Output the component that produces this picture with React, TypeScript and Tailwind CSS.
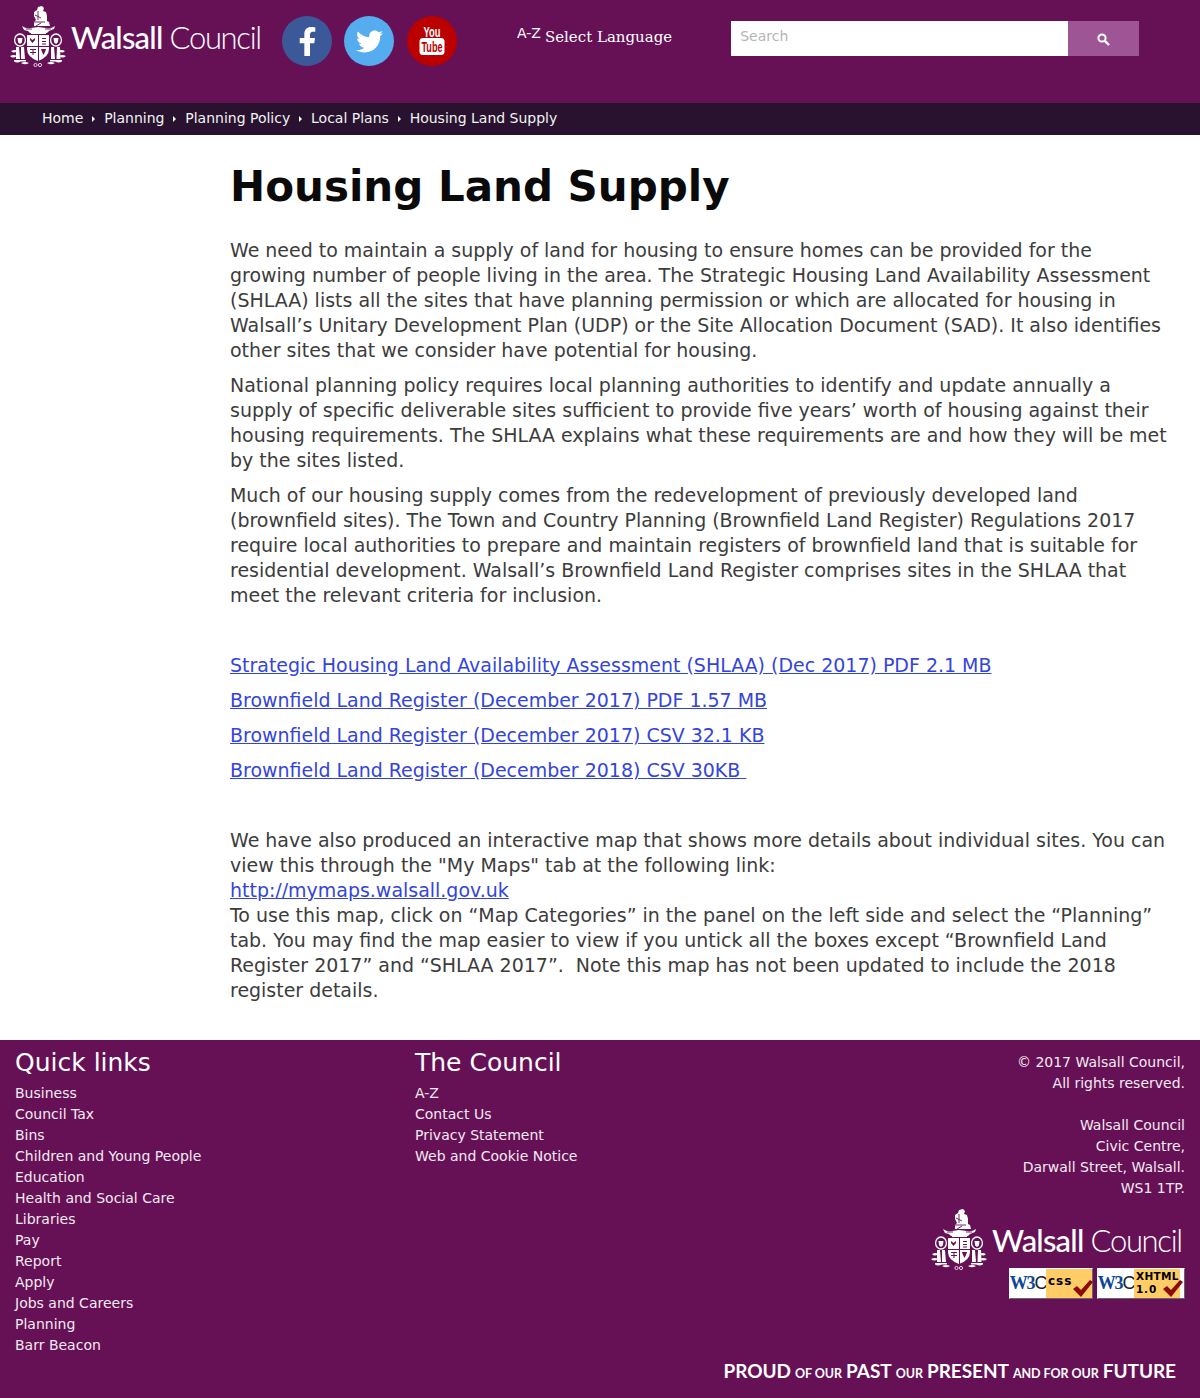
import React from "react";
import { FaFacebookF, FaTwitter } from "react-icons/fa";

function Crest({ className }: { className?: string }) {
  return (
    <svg viewBox="0 0 58 62" className={className} fill="none">
      {/* crest figure */}
      <g fill="#fff">
        <path d="M25 7l3-2 1-3 4-1 2 2-1 3 3 1 1 4 0 5 2 1 1 4-16 0 0-4 2-2-2-4z" />
        <path d="M13 21q4 3 9 2l7-1 8 1q5 1 9-2l-1 3-5 2-2 2-17 0-2-2-4-1z" />
        <path d="M22 27h15v2H22z" />
      </g>
      <g stroke="#661155" strokeWidth=".9">
        <path d="M29 6v9M26 10l6 3M25 17h11M27 21l5-3M17 24h6M36 24h6" />
      </g>
      {/* lions */}
      <g stroke="#fff" strokeWidth="1.3" fill="#661155">
        <ellipse cx="11" cy="35" rx="5.4" ry="6" />
        <ellipse cx="47" cy="35" rx="5.4" ry="6" />
      </g>
      <g fill="#fff">
        <path d="M8.5 33h5l-.6 4.500-1.900 1.500-1.900-1.500zM44.500 33h5l-.6 4.500-1.900 1.500-1.900-1.500z" />
        <path d="M7 42h3l1 12h-4zM12 42h3l1 12h-4zM42 42h3l1 12h-4zM48 42h3l.5 12h-4z" />
        <path d="M5 55h12v1.500H5zM41 55h12v1.500H41z" />
        <path d="M2 46q4-2 6 0q-3 3-6 0zM1 51q4-2 7 0q-4 3-7 0zM5 56q4-2 7 0q-4 3-7 0zM12 58q4-2 8 0q-4 2.500-8 0zM56 46q-4-2-6 0q3 3 6 0zM57 51q-4-2-7 0q4 3 7 0zM53 56q-4-2-7 0q4 3 7 0zM46 58q-4-2-8 0q4 2.500 8 0z" />
      </g>
      {/* shield */}
      <path d="M18 30h22v14q0 8-11 12q-11-4-11-12z" fill="#fff" />
      <g fill="#661155">
        <path d="M29 30h1v26h-1zM18 41h22v1H18z" />
        <path d="M21 33l2.500 2 2.500-2v2l-2.500 3-2.500-3zM33 33h4v1h-4zM33 36h4v1h-4zM33 38.500h4v1h-4z" />
        <path d="M21 44h6v1h-6zM23.500 44h1v6h-1zM21 47h6v1h-6z" />
        <path d="M32 44l5 0-1 3-1.500 3-1.500-3z" />
      </g>
      <circle cx="26.500" cy="60" r="1.600" stroke="#fff" strokeWidth=".8" />
      <circle cx="31" cy="60" r="1.600" stroke="#fff" strokeWidth=".8" />
    </svg>
  );
}

function Logo() {
  return (
    <div className="flex items-start">
      <Crest className="w-[58px] h-[62px] shrink-0" />
      <div className="ml-[4px] mt-[12px] flex whitespace-nowrap font-['Lato',sans-serif] text-[31px] leading-[40px] text-white text-left">
        <span className="font-medium tracking-[-0.800px]">Walsall</span>
        <span className="font-light ml-[7px] tracking-[-1.300px]">Council</span>
      </div>
    </div>
  );
}

function YouTube() {
  return (
    <svg viewBox="0 0 50 50" className="w-[50px] h-[50px] ml-[1px]">
      <circle cx="25" cy="25" r="25" fill="#bb0000" />
      <text x="25" y="20.500" textAnchor="middle" fill="#fff" fontFamily="Liberation Sans, sans-serif" fontWeight="700" fontSize="14" textLength="17" lengthAdjust="spacingAndGlyphs">You</text>
      <rect x="12.500" y="22" width="25" height="17" rx="3.500" fill="#fff" />
      <text x="25" y="36" textAnchor="middle" fill="#bb0000" fontFamily="Liberation Sans, sans-serif" fontWeight="700" fontSize="15" textLength="21" lengthAdjust="spacingAndGlyphs">Tube</text>
    </svg>
  );
}

function Crumb({ children, last }: { children: React.ReactNode; last?: boolean }) {
  return (
    <>
      <span>{children}</span>
      {!last && <span className="mx-[8.900px] w-0 h-0 border-y-[3px] border-y-transparent border-l-[3px] border-l-white mt-[2px]" />}
    </>
  );
}

function W3C({ label, second, wide }: { label: string; second?: string; wide?: boolean }) {
  return (
    <div className={`relative h-[31px] bg-white border border-white border-r-[#666] border-b-[#666] flex text-left ${wide ? "w-[88px] pr-[4px]" : "w-[84px]"}`}>
      <div className="w-[36px] h-[29px] shrink-0 flex items-center justify-center whitespace-nowrap overflow-hidden font-['Liberation_Serif',serif] text-[18px] leading-[29px] tracking-[-1.200px] font-bold text-[#0c479c]">
        W3<span className="font-['Liberation_Sans',sans-serif] font-normal text-[#222]">C</span>
      </div>
      <div className="flex-1 bg-[#fc6] pl-[2px] font-['DejaVu_Sans',sans-serif] font-bold text-black text-[11px] leading-[13px] flex flex-col justify-center">
        {second ? (
          <>
            <span className="text-[10.500px] tracking-[0.300px]">{label}</span>
            <span className="text-[10.500px] tracking-[0.800px] pb-[2px]">{second}</span>
          </>
        ) : (
          <span className="text-[12px] tracking-[1px] pb-[4px]">{label}</span>
        )}
      </div>
      <svg viewBox="0 0 22 18" className={`absolute bottom-[1px] w-[22px] h-[18px] ${wide ? "right-[0px]" : "right-[-2px]"}`}>
        <path d="M1 10l4-3 4 4 9-10 3 2-12 15z" fill="#8b0a0a" />
      </svg>
    </div>
  );
}

const quick = ["Business", "Council Tax", "Bins", "Children and Young People", "Education", "Health and Social Care", "Libraries", "Pay", "Report", "Apply", "Jobs and Careers", "Planning", "Barr Beacon"];
const council = ["A-Z", "Contact Us", "Privacy Statement", "Web and Cookie Notice"];
const linkCls = "text-[#3344dd] underline";

export default function App() {
  return (
    <div className="w-[1200px] h-[1398px] bg-white font-['DejaVu_Sans',sans-serif] overflow-hidden">
      <header className="h-[103px] bg-[#661155] flex items-start pl-[9px]">
        <div className="mt-[5px] w-[252px] shrink-0"><Logo /></div>
        <div className="flex gap-[12px] mt-[16px] ml-[21px]">
          <div className="w-[50px] h-[50px] rounded-full bg-[#3b5998] flex items-center justify-center text-white text-[29px]"><FaFacebookF /></div>
          <div className="w-[50px] h-[50px] rounded-full bg-[#55acee] flex items-center justify-center text-white text-[27px]"><FaTwitter /></div>
          <YouTube />
        </div>
        <div className="ml-[60px] mt-[25px] text-white text-[14px] leading-[17px]">A-Z</div>
        <div className="ml-[4px] mt-[28px] text-white text-[15px] leading-[18px] font-['DejaVu_Serif',serif]">Select Language</div>
        <div className="ml-[59px] mt-[21px] w-[337px] h-[35px] bg-white pl-[9px] pt-[7px] text-[14px] leading-[17px] text-[#b5b5b5]">Search</div>
        <div className="mt-[21px] w-[71px] h-[35px] bg-[#9e5595] flex items-center justify-center">
          <svg viewBox="0 0 13 13" className="w-[13px] h-[13px] mt-[1px]">
            <circle cx="5" cy="5" r="3.600" fill="none" stroke="#fff" strokeWidth="2" />
            <path d="M7.800 7.800L12 12" stroke="#fff" strokeWidth="2.400" />
          </svg>
        </div>
      </header>
      <nav className="h-[32px] bg-[#29122f] flex items-center pl-[42px] pb-[2px] text-[14px] text-[#f2f2f2]">
        <Crumb>Home</Crumb>
        <Crumb>Planning</Crumb>
        <Crumb>Planning Policy</Crumb>
        <Crumb>Local Plans</Crumb>
        <Crumb last>Housing Land Supply</Crumb>
      </nav>
      <main className="h-[905px] pl-[230px] pr-[30px] pt-[26px] text-[#3c3c3c] text-[18.980px] leading-[25px]">
        <h1 className="text-[42px] leading-[52px] font-bold text-[#0a0a0a] mb-[25px]">Housing Land Supply</h1>
        <p className="mb-[10px]">We need to maintain a supply of land for housing to ensure homes can be provided for the growing number of people living in the area. The Strategic Housing Land Availability Assessment (SHLAA) lists all the sites that have planning permission or which are allocated for housing in Walsall’s Unitary Development Plan (UDP) or the Site Allocation Document (SAD). It also identifies other sites that we consider have potential for housing.</p>
        <p className="mb-[10px]">National planning policy requires local planning authorities to identify and update annually a supply of specific deliverable sites sufficient to provide five years’ worth of housing against their housing requirements. The SHLAA explains what these requirements are and how they will be met by the sites listed.</p>
        <p className="mb-[45px]">Much of our housing supply comes from the redevelopment of previously developed land (brownfield sites). The Town and Country Planning (Brownfield Land Register) Regulations 2017 require local authorities to prepare and maintain registers of brownfield land that is suitable for residential development. Walsall’s Brownfield Land Register comprises sites in the SHLAA that meet the relevant criteria for inclusion.</p>
        <p className="mb-[10px]"><a className={linkCls}>Strategic Housing Land Availability Assessment (SHLAA) (Dec 2017) PDF 2.1 MB</a></p>
        <p className="mb-[10px]"><a className={linkCls}>Brownfield Land Register (December 2017) PDF 1.57 MB</a></p>
        <p className="mb-[10px]"><a className={linkCls}>Brownfield Land Register (December 2017) CSV 32.1 KB</a></p>
        <p className="mb-[45px]"><a className={`${linkCls} whitespace-pre`}>Brownfield Land Register (December 2018) CSV 30KB </a></p>
        <p>We have also produced an interactive map that shows more details about individual sites. You can view this through the "My Maps" tab at the following link:<br /><a className={linkCls}>http://mymaps.walsall.gov.uk</a><br />To use this map, click on “Map Categories” in the panel on the left side and select the “Planning” tab. You may find the map easier to view if you untick all the boxes except “Brownfield Land Register 2017” and “SHLAA 2017”.&nbsp; Note this map has not been updated to include the 2018 register details.</p>
      </main>
      <footer className="h-[358px] bg-[#661155] text-[14px] leading-[21px] flex px-[15px] pt-[6px] text-[#f4eaf2]">
        <div className="w-[400px] shrink-0">
          <h2 className="text-[25px] leading-[33px] mb-[4px] text-white">Quick links</h2>
          <ul>{quick.map((q) => <li key={q}>{q}</li>)}</ul>
        </div>
        <div className="w-[170px] shrink-0">
          <h2 className="text-[25px] leading-[33px] mb-[4px] text-white whitespace-nowrap">The Council</h2>
          <ul className="whitespace-nowrap">{council.map((q) => <li key={q}>{q}</li>)}</ul>
        </div>
        <div className="flex-1 min-w-0 flex flex-col items-end text-right pt-[6px]">
          <p>© 2017 Walsall Council,<br />All rights reserved.</p>
          <p className="mt-[21px]">Walsall Council<br />Civic Centre,<br />Darwall Street, Walsall.<br />WS1 1TP.</p>
          <div className="mt-[9px] w-[255px]"><Logo /></div>
          <div className="flex gap-[4px] mt-[-2px]">
            <W3C label="css" />
            <W3C label="XHTML" second="1.0" wide />
          </div>
          <div className="mt-[59px] mr-[9px] flex items-baseline gap-[4px] tracking-[-0.050px] whitespace-nowrap font-['Lato',sans-serif] font-bold text-white text-[19px] leading-[26px]">
            <span>PROUD</span><span className="text-[12.500px]">OF OUR</span><span>PAST</span><span className="text-[12.500px]">OUR</span><span>PRESENT</span><span className="text-[12.500px]">AND FOR OUR</span><span>FUTURE</span>
          </div>
        </div>
      </footer>
    </div>
  );
}
